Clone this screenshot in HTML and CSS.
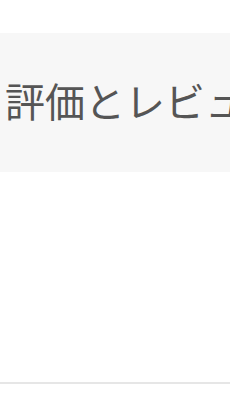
FILE: index.html
```html
<!DOCTYPE html>
<html lang="ja">
<head>
    <meta charset="UTF-8">
    <meta name="viewport" content="width=device-width, initial-scale=1.0">
    <title>評価とレビュー</title>
    <link rel="stylesheet" href="styles.css">
</head>
<body>
    <div class="page">
        <header class="section-header">
            <h1>評価とレビュー</h1>
        </header>
        <div class="review-list"></div>
        <footer class="bottom-bar"></footer>
    </div>
</body>
</html>
```

FILE: styles.css
```css
/* 全体 */
body {
    margin: 0;
    background-color: #fff;
    font-family: "Noto Sans CJK JP", "Noto Sans", sans-serif;
    color: #555;
}

.page {
    width: 230px;
    height: 400px;
    overflow: hidden;
    padding-top: 33px;
    box-sizing: border-box;
}

/* ヘッダー */
.section-header {
    height: 139px;
    display: flex;
    align-items: center;
    padding: 0 0 6px 5px;
    box-sizing: border-box;
    background-color: #f7f7f7;
    overflow: hidden;
}

.section-header h1 {
    margin: 0;
    font-size: 40px;
    font-weight: normal;
    line-height: 1;
    white-space: nowrap;
    color: #555;
}

/* 一覧 */
.review-list {
    height: 210px;
}

.bottom-bar {
    border-top: 2px solid #e6e6e6;
    height: 16px;
}
```
